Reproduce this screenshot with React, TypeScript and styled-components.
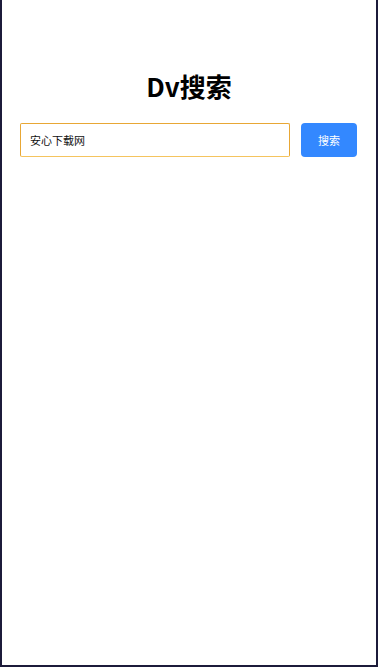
import React, { useState } from "react";
import styled, { createGlobalStyle } from "styled-components";

const GlobalStyle = createGlobalStyle`
  html, body {
    margin: 0;
    padding: 0;
    background: #ffffff;
  }
  body {
    font-family: "Noto Sans CJK SC", "Noto Sans", sans-serif;
  }
`;

const Frame = styled.div`
  box-sizing: border-box;
  width: 378px;
  height: 667px;
  border-left: 2px solid #1c1b3a;
  border-right: 2px solid #1c1b3a;
  border-bottom: 2px solid #1c1b3a;
  background: #ffffff;
  display: flex;
  flex-direction: column;
`;

const Title = styled.h1`
  margin: 66px 0 0;
  height: 39px;
  line-height: 39px;
  font-size: 26px;
  font-weight: 700;
  color: #000000;
  text-align: center;
`;

const SearchRow = styled.div`
  display: flex;
  align-items: center;
  gap: 11px;
  padding: 18px 19px 0 18px;
`;

const SearchInput = styled.input`
  flex: 1;
  min-width: 0;
  box-sizing: border-box;
  height: 34px;
  padding: 0 9px;
  border: 1px solid #e8a735;
  border-bottom-color: #f5c45e;
  border-radius: 2px;
  font-family: "Noto Sans CJK SC", sans-serif;
  font-size: 11px;
  color: #111111;
  outline: none;
  background: #ffffff;
`;

const SearchButton = styled.button`
  width: 56px;
  height: 34px;
  border: none;
  border-radius: 4px;
  background: #3388ff;
  color: #ffffff;
  font-family: "Noto Sans CJK SC", sans-serif;
  font-size: 11px;
  cursor: pointer;
`;

const App = () => {
  const [query, setQuery] = useState("安心下载网");

  return (
    <>
      <GlobalStyle />
      <Frame>
        <Title>Dv搜索</Title>
        <SearchRow>
          <SearchInput value={query} onChange={(e) => setQuery(e.target.value)} />
          <SearchButton>搜索</SearchButton>
        </SearchRow>
      </Frame>
    </>
  );
};

export default App;
